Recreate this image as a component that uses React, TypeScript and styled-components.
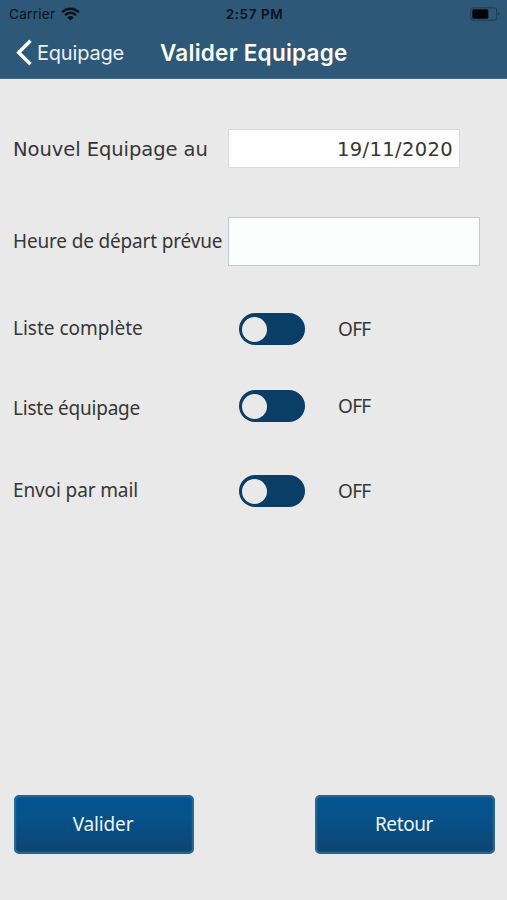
import React from "react";
import styled, { createGlobalStyle } from "styled-components";

const GlobalStyle = createGlobalStyle`
  * { box-sizing: border-box; }
  body { margin: 0; background: #e9e9e9; }
`;

const Screen = styled.div`
  width: 507px;
  height: 900px;
  display: flex;
  flex-direction: column;
  background: #e9e9e9;
  color: #363636;
  overflow: hidden;
  font-family: "Noto Sans", sans-serif;
`;

const Header = styled.header`
  height: 79px;
  flex: none;
  background: #2e5878;
  border-bottom: 1px solid #466b88;
  font-family: Inter, sans-serif;
`;

const StatusBar = styled.div`
  height: 27px;
  display: grid;
  grid-template-columns: 1fr auto 1fr;
  align-items: center;
  padding: 0 7px 0 9px;
  color: #0a1218;
`;

const Carrier = styled.div`
  display: flex;
  align-items: center;
  gap: 6px;
  font-size: 13.5px;
  letter-spacing: 0.3px;
`;

const Clock = styled.div`
  font-size: 13.5px;
  font-weight: 600;
  letter-spacing: 0.55px;
`;

const BatteryIcon = styled.svg`
  justify-self: end;
`;

const NavBar = styled.div`
  height: 51px;
  display: flex;
  align-items: center;
  padding-left: 16px;
  color: #fff;
`;

const BackButton = styled.button`
  width: 144px;
  display: flex;
  align-items: center;
  gap: 5px;
  padding: 0;
  border: 0;
  background: none;
  color: #e9f2fa;
  font: 400 20px/26px Inter, sans-serif;
  letter-spacing: -0.2px;
`;

const Title = styled.h1`
  margin: 0;
  font-size: 22.5px;
  line-height: 26px;
  font-weight: 600;
  letter-spacing: 0.25px;
`;

const Form = styled.main`
  flex: 1;
  padding: 50px 0 0 13px;
`;

const Field = styled.div<{ $height: number; $gap: number }>`
  display: flex;
  align-items: center;
  height: ${(p) => p.$height}px;
  margin-bottom: ${(p) => p.$gap}px;
`;

const Label = styled.label<{ $wide?: boolean; $spacing?: number; $drop?: number }>`
  width: 215px;
  flex: none;
  white-space: nowrap;
  font-family: ${(p) => (p.$wide ? '"DejaVu Sans"' : '"Noto Sans"')}, sans-serif;
  font-size: ${(p) => (p.$wide ? 19.5 : 19)}px;
  line-height: 26px;
  letter-spacing: ${(p) => p.$spacing ?? 0}px;
  padding-top: ${(p) => Math.max(0, p.$drop ?? 0)}px;
  padding-bottom: ${(p) => Math.max(0, -(p.$drop ?? 0))}px;
`;

const DateInput = styled.input`
  width: 232px;
  height: 39px;
  padding: 2px 6px 0 7px;
  border: 1px solid #d8dadb;
  background: #fff;
  color: #363636;
  text-align: right;
  font: 19.5px "DejaVu Sans", sans-serif;
  letter-spacing: 0.35px;
`;

const TimeInput = styled.input`
  width: 252px;
  height: 49px;
  padding: 0 7px;
  border: 1px solid #c2cbd1;
  background: #fcfdfd;
  font: 19px "Noto Sans", sans-serif;
`;

const Toggle = styled.button`
  width: 66px;
  height: 32px;
  margin: 0 33.5px 0 10.5px;
  padding: 0 0 0 3px;
  border: 0;
  border-radius: 16px;
  background: #0b3e66;
  display: flex;
  align-items: center;
`;

const Knob = styled.span`
  width: 25px;
  height: 25px;
  border-radius: 50%;
  background: #e9e9e9;
`;

const ToggleState = styled.span`
  font-size: 19px;
  line-height: 26px;
  letter-spacing: -0.7px;
`;

const Actions = styled.footer`
  display: flex;
  justify-content: space-between;
  padding: 0 12px 46px 14px;
`;

const ActionButton = styled.button<{ $spacing: number }>`
  width: 180px;
  height: 59px;
  padding: 0 2px 2px 0;
  border: 2px solid #286590;
  border-radius: 5px;
  background: linear-gradient(#035593, #07518a 40%, #0e4470);
  background-clip: padding-box;
  background-color: #286590;
  box-shadow: inset 0 0 2px #1b6597;
  color: #edf5fc;
  font: 19px "Noto Sans", sans-serif;
  letter-spacing: ${(p) => p.$spacing}px;
`;

const toggles = [
  { label: "Liste complète", spacing: 0, drop: -2, gap: 45 },
  { label: "Liste équipage", spacing: -0.23, drop: 4, gap: 53 },
  { label: "Envoi par mail", spacing: -0.12, drop: -2, gap: 0 },
];

export default function App() {
  return (
    <Screen>
      <GlobalStyle />
      <Header>
        <StatusBar>
          <Carrier>
            Carrier
            <svg width="19" height="14" viewBox="0 0 19 14" fill="none" stroke="currentColor" strokeWidth="2.5">
              <path d="M1.2 5.1a11.7 11.7 0 0 1 16.6 0M4.1 8.1a7.6 7.6 0 0 1 10.8 0" />
              <path d="M6.3 10.4a4.5 4.5 0 0 1 6.4 0L9.5 13.6Z" fill="currentColor" stroke="none" />
            </svg>
          </Carrier>
          <Clock>2:57 PM</Clock>
          <BatteryIcon width="30" height="14" viewBox="0 0 30 14">
            <rect x="0.7" y="0.7" width="26" height="12.6" rx="3" fill="none" stroke="#1e3d54" strokeWidth="1.1" />
            <rect x="2.3" y="2.3" width="16" height="9.4" rx="1.5" fill="#000407" />
            <path d="M28 4.9a2.3 2.3 0 0 1 0 4.2Z" fill="#1e3d54" />
          </BatteryIcon>
        </StatusBar>
        <NavBar>
          <BackButton>
            <svg width="16" height="27" viewBox="0 0 16 27" fill="none" stroke="#fff" strokeWidth="3.5">
              <path d="M14.5 1.8 2.7 13.5l11.8 11.7" />
            </svg>
            Equipage
          </BackButton>
          <Title>Valider Equipage</Title>
        </NavBar>
      </Header>
      <Form>
        <Field $height={39} $gap={49}>
          <Label $wide $spacing={-0.05} $drop={2}>Nouvel Equipage au</Label>
          <DateInput readOnly value="19/11/2020" />
        </Field>
        <Field $height={49} $gap={47}>
          <Label $drop={-1} $spacing={-0.17}>Heure de départ prévue</Label>
          <TimeInput />
        </Field>
        {toggles.map((t) => (
          <Field key={t.label} $height={32} $gap={t.gap}>
            <Label $spacing={t.spacing} $drop={t.drop}>{t.label}</Label>
            <Toggle role="switch" aria-checked="false" aria-label={t.label}>
              <Knob />
            </Toggle>
            <ToggleState>OFF</ToggleState>
          </Field>
        ))}
      </Form>
      <Actions>
        <ActionButton $spacing={-0.15}>Valider</ActionButton>
        <ActionButton $spacing={-0.4}>Retour</ActionButton>
      </Actions>
    </Screen>
  );
}
